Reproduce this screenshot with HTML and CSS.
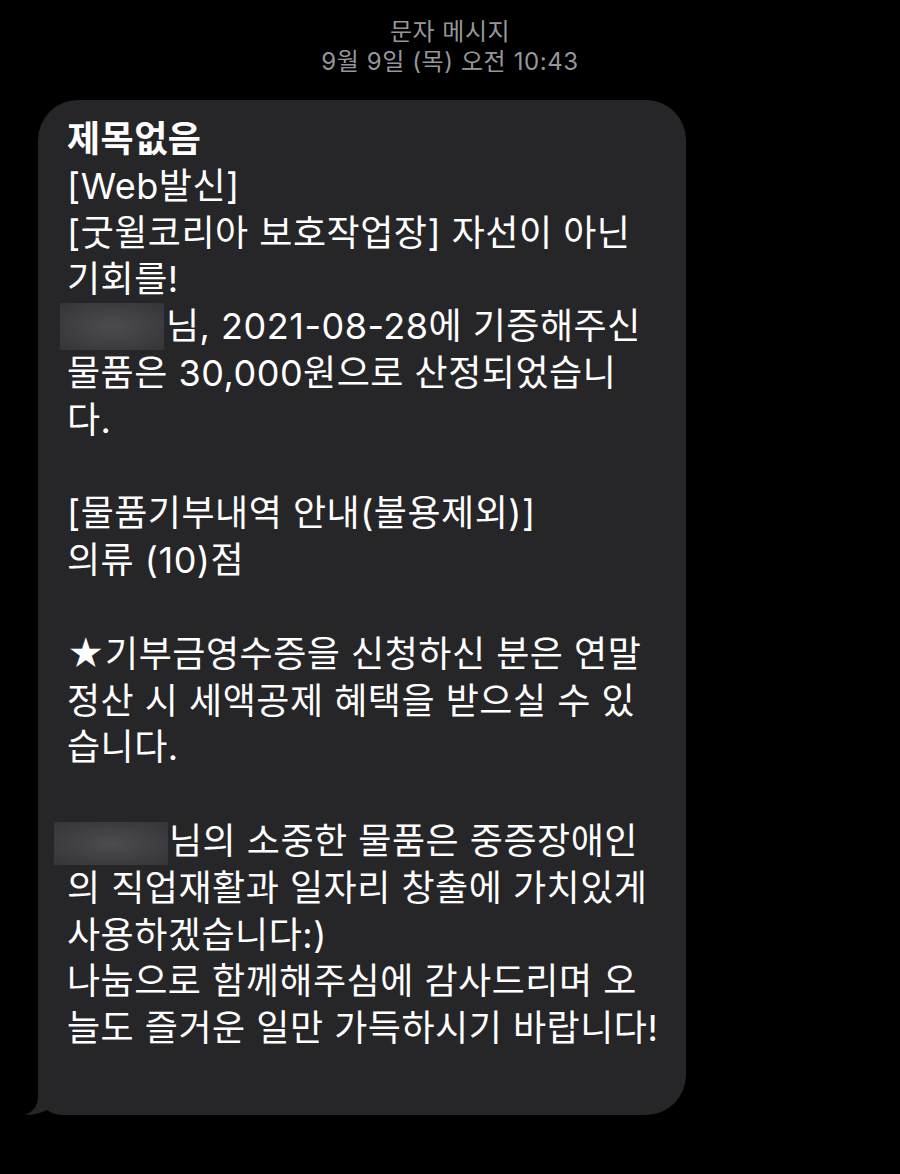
FILE: index.html
```html
<!DOCTYPE html>
<html lang="ko">
<head>
<meta charset="utf-8">
<title>문자 메시지</title>
<link rel="stylesheet" href="styles.css">
</head>
<body>
<div class="screen">
  <header class="meta">
    <div class="meta-title">문자 메시지</div>
    <div class="meta-date"><span class="meta-day">9월 9일 (목)</span> 오전 10:43</div>
  </header>
  <div class="bubble">
    <div class="line subject">제목없음</div>
    <div class="line">[Web발신]</div>
    <div class="line">[굿윌코리아 보호작업장] 자선이 아닌</div>
    <div class="line">기회를!</div>
    <div class="line"><span class="blur blur-a"></span>님, 2021-08-28에 기증해주신</div>
    <div class="line">물품은 30,000원으로 산정되었습니</div>
    <div class="line">다.</div>
    <div class="line blank"></div>
    <div class="line">[물품기부내역 안내(불용제외)]</div>
    <div class="line">의류 (10)점</div>
    <div class="line blank"></div>
    <div class="line">★기부금영수증을 신청하신 분은 연말</div>
    <div class="line">정산 시 세액공제 혜택을 받으실 수 있</div>
    <div class="line">습니다.</div>
    <div class="line blank"></div>
    <div class="line"><span class="blur blur-b"></span>님의 소중한 물품은 중증장애인</div>
    <div class="line">의 직업재활과 일자리 창출에 가치있게</div>
    <div class="line">사용하겠습니다:)</div>
    <div class="line">나눔으로 함께해주심에 감사드리며 오</div>
    <div class="line">늘도 즐거운 일만 가득하시기 바랍니다!</div>
    <svg class="tail" width="40" height="30" viewBox="0 0 40 30" aria-hidden="true">
      <path d="M14 0 L14 12 C14 21 9 27 1 30 C10 30.5 19 27.5 26 23 L26 0 Z" fill="#262629"/>
    </svg>
  </div>
</div>
</body>
</html>
```

FILE: styles.css
```css
html, body {
  margin: 0;
  padding: 0;
  background: #000;
}
body {
  font-family: "Inter", "Noto Sans CJK KR", "Noto Sans", sans-serif;
  width: 900px;
  height: 1174px;
  overflow: hidden;
}
.screen {
  padding-top: 17px;
}
.meta {
  text-align: center;
  color: #96969b;
  font-size: 24px;
  line-height: 30px;
}
.meta-title {
  letter-spacing: 0.5px;
}
.meta-date {
  letter-spacing: 0.6px;
}
.bubble {
  position: relative;
  margin: 23px 0 0 38px;
  width: 648px;
  box-sizing: border-box;
  padding: 16px 10px 63px 29px;
  background: #262629;
  border-radius: 40px 40px 40px 24px;
  color: #fff;
  font-size: 36px;
  line-height: 46.8px;
  letter-spacing: 0.5px;
}
.line {
  white-space: nowrap;
  height: 46.8px;
}
.subject {
  font-weight: 700;
}
.blur {
  display: inline-block;
  vertical-align: top;
  background: radial-gradient(ellipse at center, #4c4c50 0%, #3e3e42 60%, #353538 100%);
}
.blur-a {
  width: 104px;
  height: 47px;
  margin: 0 2px 0 -7px;
}
.blur-b {
  width: 114px;
  height: 43px;
  margin: 4px 1px 0 -13px;
}
.tail {
  position: absolute;
  left: -14px;
  bottom: 0;
  display: block;
}
```
